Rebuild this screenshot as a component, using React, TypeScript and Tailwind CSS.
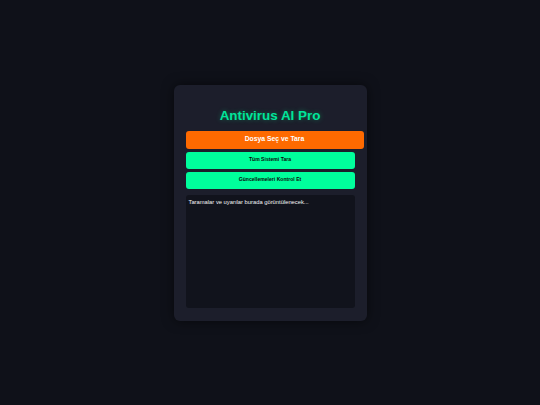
export default function App() {
  return (
    <div
      className="flex min-h-screen w-full items-center justify-center bg-[#0f1119]"
      style={{ fontFamily: '"Liberation Sans", Arial, sans-serif' }}
    >
      <div className="flex w-[193px] flex-col rounded-[6px] bg-[#1c1e2b] px-[12px] pt-[12px] pb-[13px] shadow-[0_0_12px_rgba(0,0,0,0.55)]">
        <h1 className="mt-[11px] mb-[8px] text-center text-[13.4px] font-bold leading-[15px] text-[#00e69a] [text-shadow:0_0_5px_rgba(0,255,153,0.35)]">
          Antivirus AI Pro
        </h1>

        <div className="flex flex-col gap-[3px]">
          <button className="flex h-[18px] w-[178px] items-center justify-center rounded-[3px] bg-[#ff6a00] text-[6.8px] font-bold text-white">
            Dosya Seç ve Tara
          </button>
          <button className="flex h-[17px] w-full items-center justify-center rounded-[3px] bg-[#00ff9c] text-[5.1px] font-bold text-[#0a0a0a]">
            Tüm Sistemi Tara
          </button>
          <button className="flex h-[17px] w-full items-center justify-center rounded-[3px] bg-[#00ff9c] text-[5.1px] font-bold text-[#0a0a0a]">
            Güncellemeleri Kontrol Et
          </button>
        </div>

        <div className="mt-[6px] h-[113px] rounded-[3px] bg-[#11131c] px-[3px] pt-[3px] text-[5.8px] text-[#f3f4f6]">
          Taramalar ve uyarılar burada görüntülenecek...
        </div>
      </div>
    </div>
  );
}
